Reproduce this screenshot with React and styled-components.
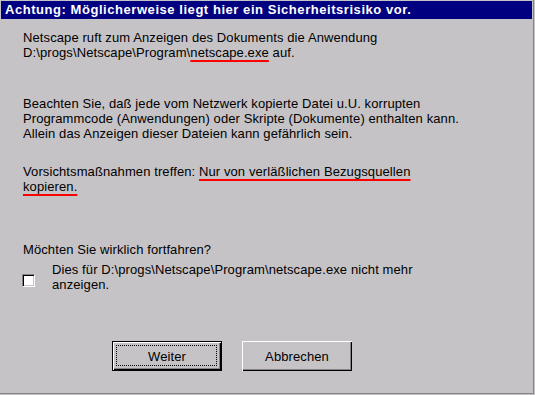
import React from "react";
import styled, { createGlobalStyle } from "styled-components";

const face = "#c6c3c6";
const shadow = "#848284";

const GlobalStyle = createGlobalStyle`
  html, body {
    margin: 0;
    background: ${face};
  }
  body {
    font-family: "Liberation Sans", Arial, sans-serif;
  }
`;

const Window = styled.div`
  box-sizing: border-box;
  width: 534px;
  height: 394px;
  padding: 1px 1px 0 1px;
  background: ${face};
  border-right: 1px solid ${shadow};
  border-bottom: 1px solid ${shadow};
  display: flex;
  flex-direction: column;
`;

const TitleBar = styled.div`
  height: 18px;
  background: #000080;
  color: #fff;
  font-weight: bold;
  font-size: 13px;
  letter-spacing: 0.55px;
  line-height: 18px;
  padding-left: 4px;
  white-space: nowrap;
`;

const Body = styled.div`
  padding: 11px 0 0 22px;
  font-size: 13px;
  letter-spacing: 0.1px;
  line-height: 15px;
  color: #000;
`;

const Para = styled.p`
  margin: ${({ $gap }) => $gap || 0}px 0 0;
`;

const Marked = styled.span`
  text-decoration: underline;
  text-decoration-color: #ff0000;
  text-decoration-thickness: 2px;
  text-underline-offset: 3px;
`;

const CheckRow = styled.label`
  display: flex;
  align-items: flex-start;
  gap: 17px;
  margin-top: 5px;
`;

const CheckBox = styled.span`
  flex: none;
  box-sizing: border-box;
  width: 13px;
  height: 13px;
  margin: 12px 0 0 -1px;
  background: #fff;
  border-top: 1px solid ${shadow};
  border-left: 1px solid ${shadow};
  border-right: 1px solid #fff;
  border-bottom: 1px solid #fff;
  box-shadow: inset 1px 1px 0 #000, inset -1px -1px 0 ${face};
`;

const ButtonRow = styled.div`
  display: flex;
  gap: 20px;
  padding: 49px 0 0 111px;
`;

const Button = styled.button`
  box-sizing: border-box;
  width: 110px;
  height: 30px;
  padding: 0;
  background: ${face};
  color: #000;
  font-family: "Liberation Sans", Arial, sans-serif;
  font-size: 13px;
  letter-spacing: 0.1px;
  border: ${({ $default }) => ($default ? "1px solid #000" : "none")};
  box-shadow: inset 1px 1px 0 #fff, inset -1px -1px 0 #000, inset -2px -2px 0 ${shadow};
  position: relative;
  cursor: pointer;
`;

const FocusRing = styled.span`
  position: absolute;
  inset: 3px 4px 4px 3px;
  border: 1px dotted #000;
`;

export default function App() {
  return (
    <>
      <GlobalStyle />
      <Window>
        <TitleBar>Achtung: Möglicherweise liegt hier ein Sicherheitsrisiko vor.</TitleBar>
        <Body>
          <Para>
            Netscape ruft zum Anzeigen des Dokuments die Anwendung
            <br />
            D:\progs\Netscape\Program\<Marked>netscape.exe</Marked> auf.
          </Para>
          <Para $gap={36}>
            Beachten Sie, daß jede vom Netzwerk kopierte Datei u.U. korrupten
            <br />
            Programmcode (Anwendungen) oder Skripte (Dokumente) enthalten kann.
            <br />
            Allein das Anzeigen dieser Dateien kann gefährlich sein.
          </Para>
          <Para $gap={23}>
            Vorsichtsmaßnahmen treffen: <Marked>Nur von verläßlichen Bezugsquellen</Marked>
            <br />
            <Marked>kopieren.</Marked>
          </Para>
          <Para $gap={48}>Möchten Sie wirklich fortfahren?</Para>
          <CheckRow>
            <CheckBox />
            <span>
              Dies für D:\progs\Netscape\Program\netscape.exe nicht mehr
              <br />
              anzeigen.
            </span>
          </CheckRow>
        </Body>
        <ButtonRow>
          <Button $default>
            <FocusRing />
            Weiter
          </Button>
          <Button>Abbrechen</Button>
        </ButtonRow>
      </Window>
    </>
  );
}
